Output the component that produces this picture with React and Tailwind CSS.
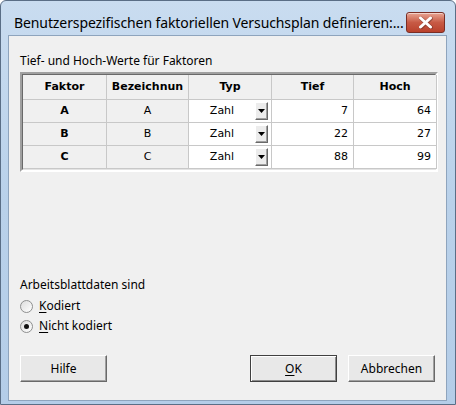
import { useState } from 'react';

const rows = [
  { faktor: 'A', name: 'A', typ: 'Zahl', tief: 7, hoch: 64 },
  { faktor: 'B', name: 'B', typ: 'Zahl', tief: 22, hoch: 27 },
  { faktor: 'C', name: 'C', typ: 'Zahl', tief: 88, hoch: 99 },
];

const ui = { fontFamily: '"Noto Sans", "Open Sans", sans-serif' };
const gridFont = { fontFamily: '"DejaVu Sans", Verdana, sans-serif' };

function CloseButton() {
  return (
    <div className="mt-[11px] flex h-[21px] w-[39px] shrink-0 items-center justify-center rounded-[3px] border border-[#7a2e25] bg-gradient-to-b from-[#e8a493] via-[#c75a45] to-[#b9412c] shadow-[inset_0_1px_0_rgba(255,255,255,0.5)]">
      <svg width="15" height="13" viewBox="0 0 15 13">
        <path d="M2.5 2 L12.5 11 M12.5 2 L2.5 11" stroke="#5a2a22" strokeWidth="4" strokeLinecap="round" opacity="0.45" transform="translate(0.5 0.5)" />
        <path d="M2.5 2 L12.5 11 M12.5 2 L2.5 11" stroke="#ffffff" strokeWidth="3" strokeLinecap="round" />
      </svg>
    </div>
  );
}

function DropButton() {
  return (
    <div className="flex h-[18px] w-[13px] items-center justify-center border border-t-[#ffffff] border-l-[#ffffff] border-r-[#696969] border-b-[#696969] bg-[#ececec] shadow-[inset_-1px_-1px_0_#a0a0a0]">
      <svg width="7" height="4" viewBox="0 0 7 4">
        <path d="M0 0 H7 L3.5 4 Z" fill="#000" />
      </svg>
    </div>
  );
}

function Radio({ checked, label, onClick }) {
  const [first, ...rest] = label;
  return (
    <div className="flex h-[20px] cursor-default items-center gap-[6px]" onClick={onClick}>
      <div className="flex h-[13px] w-[13px] items-center justify-center rounded-full border border-[#8e8f8f] bg-gradient-to-br from-[#dcdcdc] to-[#ffffff]">
        {checked && <div className="h-[5px] w-[5px] rounded-full bg-[#111]" />}
      </div>
      <span className="text-[12px] text-black">
        <span className="underline underline-offset-2">{first}</span>
        {rest.join('')}
      </span>
    </div>
  );
}

function Button({ children, def }) {
  return (
    <button
      className={`flex h-[27px] w-[87px] items-center justify-center border bg-[#e8e8e8] text-[12px] text-black ${
        def
          ? 'border-[#404040] shadow-[inset_1px_1px_0_#ffffff,inset_-1px_-1px_0_#8c8c8c]'
          : 'border-t-[#ffffff] border-l-[#ffffff] border-r-[#696969] border-b-[#696969] shadow-[inset_-1px_-1px_0_#a0a0a0]'
      }`}
    >
      {children}
    </button>
  );
}

export default function App() {
  const [kodiert, setKodiert] = useState(false);

  return (
    <div className="h-[405px] w-[456px] overflow-hidden bg-white" style={ui}>
      <div className="flex h-full w-full flex-col rounded-t-[6px] border border-[#5a6e86] bg-gradient-to-b from-[#c9dcf0] via-[#b9d1ea] to-[#b4cde8]">
        {/* title bar */}
        <div className="flex h-[34px] shrink-0 items-start justify-between pl-[13px] pr-[10px]">
          <div className="overflow-hidden whitespace-nowrap pt-[12px] text-[14px] leading-[20px] tracking-[-0.1px] text-black">
            Benutzerspezifischen faktoriellen Versuchsplan definieren:...
          </div>
          <CloseButton />
        </div>

        {/* client area */}
        <div className="mb-[3px] ml-[7px] mr-[8px] flex flex-1 flex-col border border-[#8ea4bd] bg-[#f0f0f0] px-[11px]">
          <div className="mt-[17px] text-[12px] leading-[16px] text-black">Tief- und Hoch-Werte für Faktoren</div>

          <div
            className="mt-[3px] w-[418px] border-2 border-t-[#a0a0a0] border-l-[#a0a0a0] border-r-[#ffffff] border-b-[#ffffff] text-[11px] text-black"
            style={gridFont}
          >
            <div className="border border-t-[#696969] border-l-[#696969] border-r-[#e3e3e3] border-b-[#e3e3e3] bg-[#f0f0f0]">
              <div className="grid grid-cols-[84px_82px_83px_82px_83px]">
                {['Faktor', 'Bezeichnun', 'Typ', 'Tief', 'Hoch'].map((h) => (
                  <div
                    key={h}
                    className="flex h-[25px] items-center justify-center overflow-hidden whitespace-nowrap border-b border-r border-[#c8c8c8] bg-[#f0f0f0] font-bold"
                  >
                    {h}
                  </div>
                ))}
                {rows.map((r) => (
                  <div key={r.faktor} className="contents">
                    <div className="flex h-[23px] items-center justify-center border-b border-r border-[#c8c8c8] font-bold">
                      {r.faktor}
                    </div>
                    <div className="flex h-[23px] items-center justify-center border-b border-r border-[#c8c8c8]">
                      {r.name}
                    </div>
                    <div className="flex h-[23px] items-center border-b border-r border-[#c8c8c8] bg-white pr-[3px]">
                      <span className="flex-1 text-center">{r.typ}</span>
                      <DropButton />
                    </div>
                    <div className="flex h-[23px] items-center justify-end border-b border-r border-[#c8c8c8] bg-white pr-[5px]">
                      {r.tief}
                    </div>
                    <div className="flex h-[23px] items-center justify-end border-b border-r border-[#c8c8c8] bg-white pr-[5px]">
                      {r.hoch}
                    </div>
                  </div>
                ))}
              </div>
            </div>
          </div>

          <div className="mt-[105px] text-[12px] leading-[16px] text-black">Arbeitsblattdaten sind</div>
          <div className="mt-[3px] flex flex-col">
            <Radio checked={kodiert} label="Kodiert" onClick={() => setKodiert(true)} />
            <Radio checked={!kodiert} label="Nicht kodiert" onClick={() => setKodiert(false)} />
          </div>

          <div className="mt-[19px] flex items-center">
            <Button>Hilfe</Button>
            <div className="flex-1" />
            <Button def>
              <span>
                <span className="underline underline-offset-2">O</span>K
              </span>
            </Button>
            <div className="w-[11px]" />
            <Button>Abbrechen</Button>
          </div>
        </div>
      </div>
    </div>
  );
}
